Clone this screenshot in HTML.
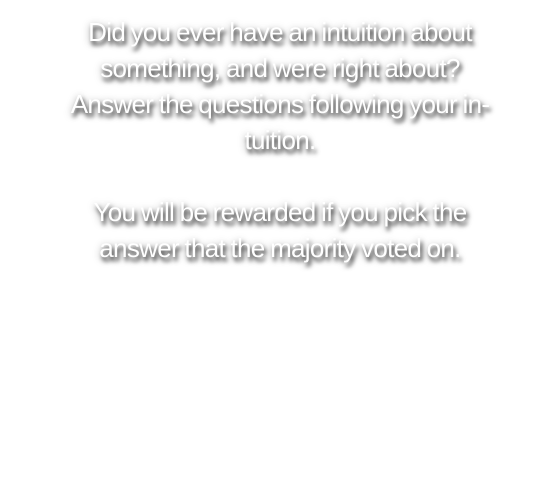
<!DOCTYPE html>
<html><head><meta charset="utf-8"><style>
html,body{margin:0;padding:0;background:#fff;width:560px;height:480px;overflow:hidden}
.t{position:absolute;left:0;width:560px;text-align:center;font-family:"Liberation Sans",sans-serif;font-size:26px;letter-spacing:-0.7px;word-spacing:-1px;line-height:36px;color:#fff;text-shadow:2px 4px 4px rgba(0,0,0,.75),0 2px 8px rgba(0,0,0,.4)}
</style></head><body>
<div class="t" style="top:14px">Did you ever have an intuition about<br>something, and were right about?<br>Answer the questions following your in-<br>tuition.</div>
<div class="t" style="top:194px">You will be rewarded if you pick the<br>answer that the majority voted on.</div>
</body></html>
